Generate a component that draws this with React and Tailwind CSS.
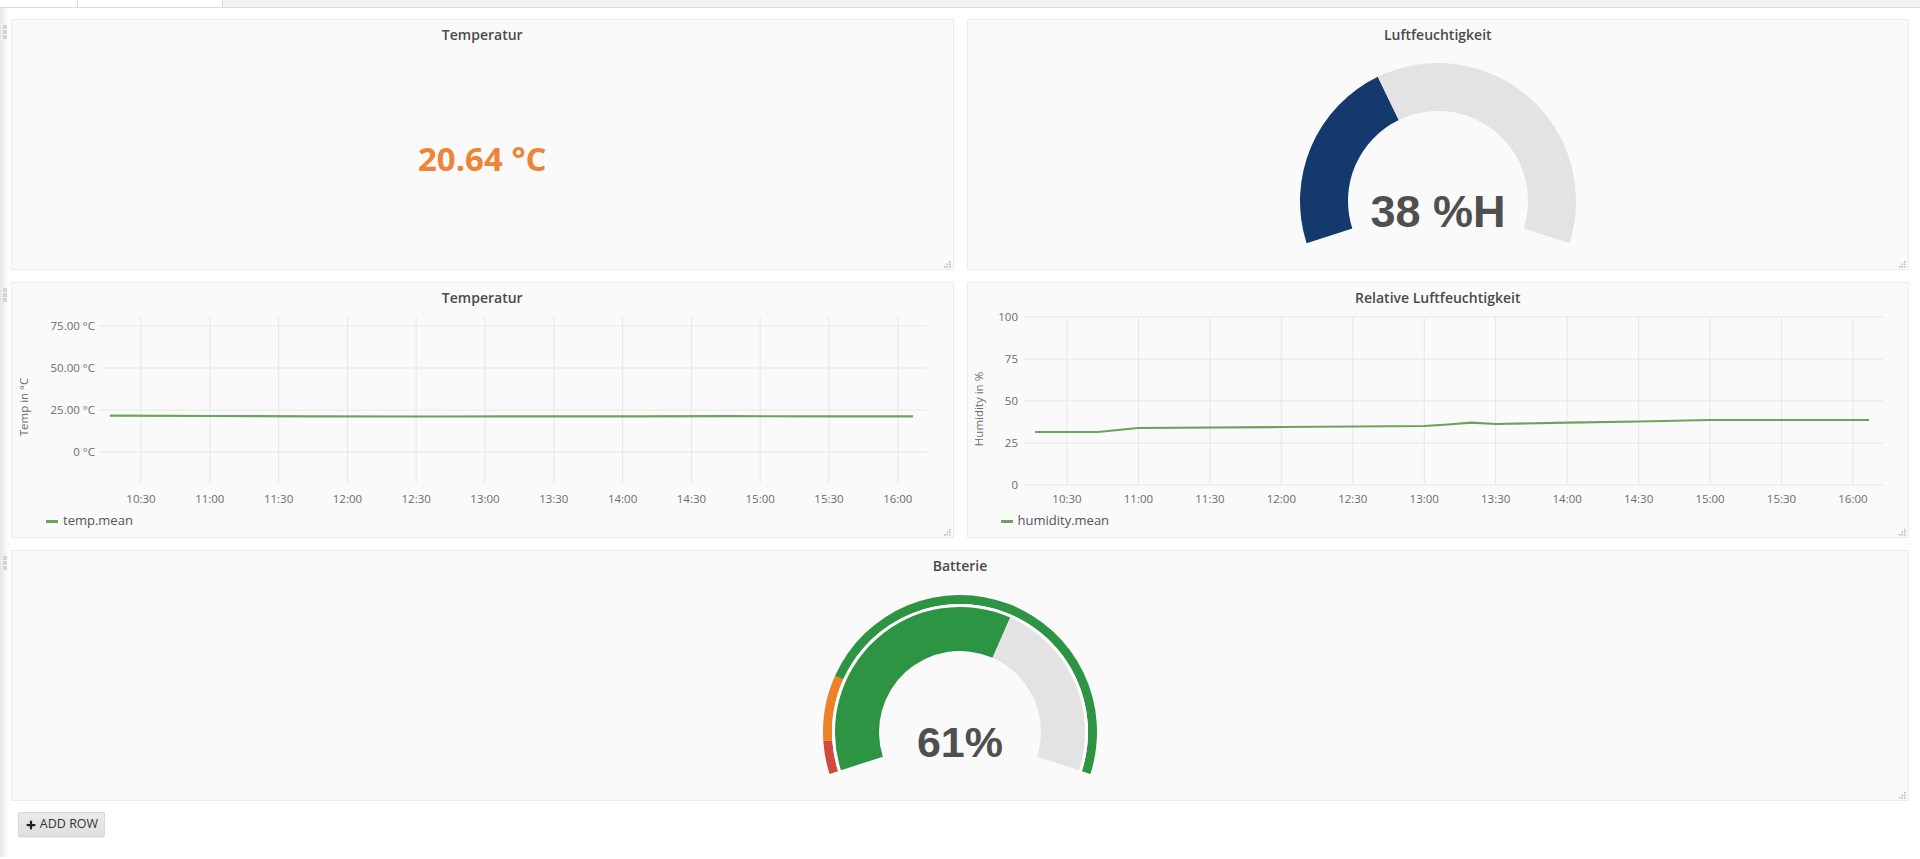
import { Plus } from "lucide-react";

const ticks = ["10:30", "11:00", "11:30", "12:00", "12:30", "13:00", "13:30", "14:00", "14:30", "15:00", "15:30", "16:00"];

const pt = (cx, cy, r, a) => {
  const rad = (a * Math.PI) / 180;
  return [cx + r * Math.cos(rad), cy - r * Math.sin(rad)];
};

// donut slice from angle a0 to a1 (degrees, clockwise on screen)
const arc = (cx, cy, r0, r1, a0, a1) => {
  const [x1, y1] = pt(cx, cy, r1, a0);
  const [x2, y2] = pt(cx, cy, r1, a1);
  const [x3, y3] = pt(cx, cy, r0, a1);
  const [x4, y4] = pt(cx, cy, r0, a0);
  const large = a0 - a1 > 180 ? 1 : 0;
  return `M${x1} ${y1} A${r1} ${r1} 0 ${large} 1 ${x2} ${y2} L${x3} ${y3} A${r0} ${r0} 0 ${large} 0 ${x4} ${y4}Z`;
};

const START = 197.8;
const SWEEP = 215.6;
const at = (p) => START - p * SWEEP;

const DragHandle = () => (
  <div className="flex w-[11px] shrink-0 flex-col gap-[1px] pl-[3px] pt-[6px]">
    <div className="h-[4px] w-[4px] bg-[#d4d4d4]" />
    <div className="h-[4px] w-[4px] bg-[#d4d4d4]" />
    <div className="h-[4px] w-[4px] bg-[#d4d4d4]" />
  </div>
);

const ResizeHandle = () => (
  <svg width="7" height="7" className="absolute bottom-[1px] right-[2px]">
    <rect x="5" y="0" width="1.6" height="1.6" fill="#bdbdbd" />
    <rect x="2.5" y="2.5" width="1.6" height="1.6" fill="#bdbdbd" />
    <rect x="5" y="2.5" width="1.6" height="1.6" fill="#bdbdbd" />
    <rect x="0" y="5" width="1.6" height="1.6" fill="#bdbdbd" />
    <rect x="2.5" y="5" width="1.6" height="1.6" fill="#bdbdbd" />
    <rect x="5" y="5" width="1.6" height="1.6" fill="#bdbdbd" />
  </svg>
);

const Panel = ({ title, className = "", children }) => (
  <div className={"relative flex flex-col border border-[#ececec] bg-[#fafafa] " + className}>
    <div className="h-[28px] pt-[5px] text-center text-[14px] font-semibold leading-[20px] text-[#4a4a4a]">
      {title}
    </div>
    {children}
    <ResizeHandle />
  </div>
);

const Legend = ({ label, offset }) => (
  <div className={"flex h-[20px] items-center gap-[5px] text-[13px] text-[#52545c] " + offset}>
    <span className="h-[3px] w-[12px] bg-[#6ca35a]" />
    {label}
  </div>
);

const axisText = { fontSize: 11.5, fill: "#6b6b6b", fontFamily: "'Open Sans', sans-serif" };

const TempChart = () => {
  const yTicks = [
    ["75.00 °C", 15],
    ["50.00 °C", 57],
    ["25.00 °C", 99],
    ["0 °C", 141],
  ];
  return (
    <svg width="940" height="200" overflow="visible" className="block overflow-visible">
      {ticks.map((t, i) => {
        const x = 129 + i * 68.8;
        return (
          <g key={t}>
            <line x1={x} x2={x} y1={6} y2={172} stroke="#e6e6e6" />
            <text x={x} y={192} textAnchor="middle" style={axisText}>{t}</text>
          </g>
        );
      })}
      {yTicks.map(([l, y]) => (
        <g key={l}>
          <line x1={88} x2={915} y1={y} y2={y} stroke="#e6e6e6" />
          <text x={83} y={y + 4} textAnchor="end" style={axisText}>{l}</text>
        </g>
      ))}
      <text transform="translate(16 96) rotate(-90)" textAnchor="middle" style={axisText}>Temp in °C</text>
      <polyline
        points="98,104.6 200,105 300,105.3 420,105.5 520,105.4 620,105.3 720,105.2 820,105.3 901,105.3"
        fill="none"
        stroke="#6ca35a"
        strokeWidth="2.2"
      />
    </svg>
  );
};

const HumidityChart = () => {
  const yTicks = [
    ["100", 6],
    ["75", 48],
    ["50", 90],
    ["25", 132],
    ["0", 174],
  ];
  return (
    <svg width="940" height="200" overflow="visible" className="block overflow-visible">
      {ticks.map((t, i) => {
        const x = 99 + i * 71.45;
        return (
          <g key={t}>
            <line x1={x} x2={x} y1={6} y2={174} stroke="#e6e6e6" />
            <text x={x} y={192} textAnchor="middle" style={axisText}>{t}</text>
          </g>
        );
      })}
      {yTicks.map(([l, y]) => (
        <g key={l}>
          <line x1={56} x2={915} y1={y} y2={y} stroke="#e6e6e6" />
          <text x={50} y={y + 4} textAnchor="end" style={axisText}>{l}</text>
        </g>
      ))}
      <text transform="translate(15 98) rotate(-90)" textAnchor="middle" style={axisText}>Humidity in %</text>
      <polyline
        points="67,121 130,121 150,119 170,117 313,116 385,115.5 456,115 480,113.5 503,111.7 528,113 599,111.7 671,110.5 742,109 901,109"
        fill="none"
        stroke="#6ca35a"
        strokeWidth="2.2"
        strokeLinejoin="round"
      />
    </svg>
  );
};

const valueText = { fontFamily: "'Liberation Sans', Arial, sans-serif", fontWeight: 700, fill: "#4f4f4f" };

const HumidityGauge = () => (
  <svg width="300" height="200" className="mx-auto block">
    <path d={arc(150, 153, 90, 138, START, at(0.38))} fill="#14396c" />
    <path d={arc(150, 153, 90, 138, at(0.38), at(1))} fill="#e3e3e3" />
    <text x="150" y="179" textAnchor="middle" style={{ ...valueText, fontSize: 45 }}>38 %H</text>
  </svg>
);

const BatteryGauge = () => (
  <svg width="300" height="200" className="mx-auto block">
    <path d={arc(150, 153, 128, 137, START, 183.8)} fill="#d44a3a" />
    <path d={arc(150, 153, 128, 137, 183.8, 155.8)} fill="#ed8128" />
    <path d={arc(150, 153, 128, 137, 155.8, at(1))} fill="#2d9444" />
    <path d={arc(150, 153, 126, 128, START, at(1))} fill="#ffffff" />
    <path d={arc(150, 153, 81, 125, START, at(0.61))} fill="#2d9444" />
    <path d={arc(150, 153, 81, 125, at(0.61), at(1))} fill="#e3e3e3" />
    <text x="150" y="178" textAnchor="middle" style={{ ...valueText, fontSize: 43 }}>61%</text>
  </svg>
);

const App = () => {
  return (
    <div className="min-h-screen bg-white font-['Open_Sans',sans-serif] text-[#52545c]">
      <div className="flex h-[8px] border-b border-[#dcdcdc]">
        <div className="w-[78px] border-r border-[#dcdcdc] bg-white" />
        <div className="w-[145px] border-r border-[#dcdcdc] bg-white" />
        <div className="flex-1 bg-[#f3f3f3]" />
      </div>
      <div className="bg-[linear-gradient(to_right,#e6e6e6,#ffffff_9px)] pb-[20px] pr-[11px] pt-[11px]">
        <div className="flex flex-col gap-[12px]">
          <div className="flex">
            <DragHandle />
            <div className="grid flex-1 grid-cols-2 gap-[13px]">
              <Panel title="Temperatur" className="h-[251px]">
                <div className="flex flex-1 items-center justify-center pb-[1px]">
                  <span className="text-[33px] font-bold leading-none text-[#ec8537]">20.64 °C</span>
                </div>
              </Panel>
              <Panel title="Luftfeuchtigkeit" className="h-[251px]">
                <HumidityGauge />
              </Panel>
            </div>
          </div>

          <div className="flex">
            <DragHandle />
            <div className="grid flex-1 grid-cols-2 gap-[13px]">
              <Panel title="Temperatur" className="h-[256px]">
                <TempChart />
                <Legend label="temp.mean" offset="pl-[34px]" />
              </Panel>
              <Panel title="Relative Luftfeuchtigkeit" className="h-[256px]">
                <HumidityChart />
                <Legend label="humidity.mean" offset="pl-[33px]" />
              </Panel>
            </div>
          </div>

          <div className="flex">
            <DragHandle />
            <Panel title="Batterie" className="h-[251px] flex-1">
              <BatteryGauge />
            </Panel>
          </div>
        </div>

        <div className="pl-[18px] pt-[11px]">
          <button className="flex h-[25px] w-[87px] items-center justify-center gap-[3px] rounded-[2px] border border-[#d6d6d6] bg-[linear-gradient(#ebebeb,#dedede)] text-[12.5px] text-[#333] shadow-[0_1px_1px_rgba(0,0,0,0.08)]">
            <Plus size={12} strokeWidth={4.5} className="text-[#222]" />
            ADD ROW
          </button>
        </div>
      </div>
    </div>
  );
};

export default App;
